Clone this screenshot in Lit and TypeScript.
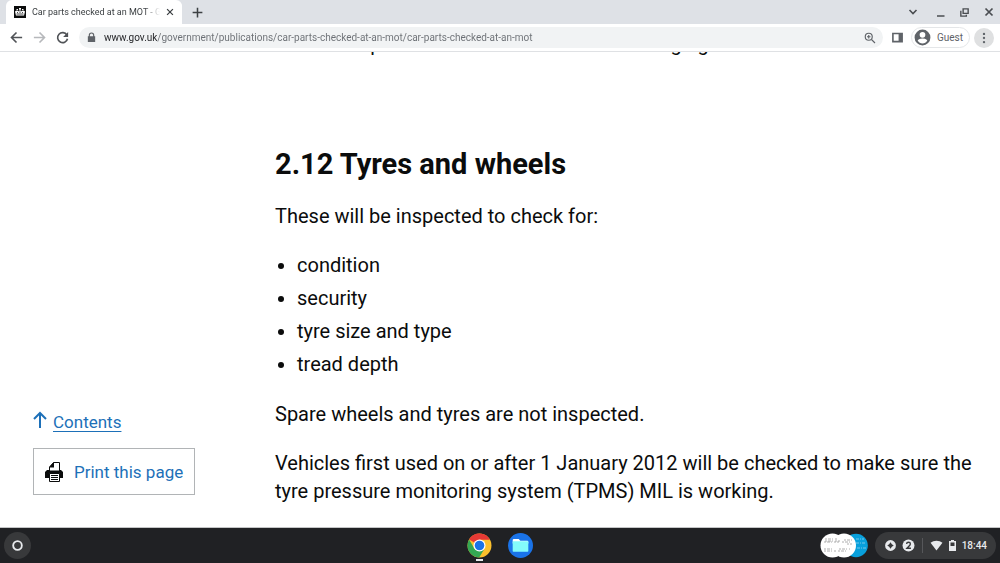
import { LitElement, html, css, svg } from "lit";
import { customElement } from "lit/decorators.js";

const stroke = (size: number, width: number, body: unknown) => html`<svg
  width=${size} height=${size} viewBox="0 0 24 24" fill="none" stroke="currentColor"
  stroke-width=${width} aria-hidden="true">${body}</svg>`;
const solid = (size: number, body: unknown) => html`<svg
  width=${size} height=${size} viewBox="0 0 24 24" fill="currentColor" aria-hidden="true">${body}</svg>`;

const resets = css`
  :host { display: block; box-sizing: border-box; }
  * { box-sizing: border-box; }
  svg { display: block; flex: none; }
  button { border: 0; padding: 0; margin: 0; background: none; color: inherit; font: inherit; cursor: pointer; display: flex; align-items: center; justify-content: center; flex: none; }
`;

@customElement("browser-bar")
class BrowserBar extends LitElement {
  static styles = [resets, css`
    :host { flex: none; font: 10px/16px Roboto, sans-serif; color: #3c4043; border-bottom: 1px solid #dfe1e4; }
    .tabs { display: flex; height: 24px; background: #dee1e6; padding-left: 6px; }
    .tab { display: flex; align-items: center; width: 176px; background: #fff; border-radius: 6px 6px 0 0; padding: 0 8px; gap: 6px; }
    .title { flex: 1; overflow: hidden; white-space: nowrap; font-size: 9px; -webkit-mask-image: linear-gradient(90deg, #000 88%, transparent); mask-image: linear-gradient(90deg, #000 88%, transparent); }
    .close { width: 8px; height: 16px; }
    .add { width: 30px; }
    .controls { margin-left: auto; display: flex; align-items: center; gap: 11px; padding-right: 5px; color: #4a4d51; }
    .controls button { width: 13px; height: 16px; }
    .controls .search { margin-right: 4px; }
    .toolbar { display: flex; align-items: center; height: 27px; background: #fff; padding: 0 6px 0 8px; color: #5f6368; }
    .nav { display: flex; gap: 7px; margin-right: 9px; }
    .nav button { width: 16px; height: 20px; color: #505357; }
    .nav .off { color: #b6b8bb; }
    .address { flex: 1; display: flex; align-items: center; gap: 7px; height: 21px; border-radius: 11px; background: #f1f3f4; padding: 0 7px; }
    .address input { flex: 1; min-width: 0; border: 0; padding: 0; outline: 0; font: 10px/16px Roboto, sans-serif; -webkit-text-fill-color: transparent; background: linear-gradient(90deg, #202124 53px, #6b6f74 53px); -webkit-background-clip: text; background-clip: text; }
    .panel { width: 26px; height: 20px; margin-left: 2px; }
    .guest { height: 21px; border: 1px solid #e4e6e8; border-radius: 11px; padding: 0 6px 0 1px; gap: 5px; color: #5f6368; }
    .menu { width: 20px; height: 20px; border-radius: 50%; background: #dfe0e1; margin-left: 4px; }
  `];
  render() {
    return html`
      <div class="tabs">
        <div class="tab">
          <svg width="12" height="12" viewBox="0 0 24 24" aria-hidden="true">
            <path fill="#0b0c0c" d="M0 0h24v24H0z" />
            <path fill="#fff" d="M4 19 2 11c2-3 6-3 8 0l1-2h2l1 2c2-3 6-3 8 0l-2 8z" />
            <path fill="#fff" d="M10 4h4v3h-1v2h-2V7h-1zM5 6h3v2H5zM16 6h3v2h-3z" />
            <path stroke="#0b0c0c" stroke-width="1.500" d="M5 16h14M7 12v2m5-3v3m5-2v2" />
          </svg>
          <span class="title">Car parts checked at an MOT - GOV.UK</span>
          <button class="close" aria-label="Close tab">${stroke(10, 3, svg`<path d="M5 5l14 14M19 5 5 19" />`)}</button>
        </div>
        <button class="add" aria-label="New tab">${stroke(13, 2.8, svg`<path d="M12 3v18M3 12h18" />`)}</button>
        <div class="controls">
          <button class="search" aria-label="Search tabs">${stroke(12, 3.2, svg`<path d="m5 8 7 7 7-7" />`)}</button>
          <button aria-label="Minimise">${stroke(12, 3, svg`<path d="M4 20h15" />`)}</button>
          <button aria-label="Restore">${stroke(11, 3, svg`<path d="M9 4h11v10H9zM4 8v12h12v-3" />`)}</button>
          <button aria-label="Close window">${stroke(12, 3.4, svg`<path d="m5 5 14 14M19 5 5 19" />`)}</button>
        </div>
      </div>
      <div class="toolbar">
        <div class="nav">
          <button aria-label="Back">${stroke(15, 2.6, svg`<path d="M21 12H4m8-8-8 8 8 8" />`)}</button>
          <button class="off" aria-label="Forward">${stroke(15, 2.6, svg`<path d="M3 12h17m-8-8 8 8-8 8" />`)}</button>
          <button aria-label="Reload">${stroke(15, 2.6, svg`<path d="M19 8a8 8 0 1 0 1 6" /><path fill="currentColor" stroke="none" d="M21 3v8h-8z" />`)}</button>
        </div>
        <div class="address">
          ${solid(11, svg`<path d="M6 9V7a6 6 0 0 1 12 0v2h2v13H4V9zm2.500 0h7V7a3.500 3.500 0 0 0-7 0z" />`)}
          <input type="text" aria-label="Address" .value=${"www.gov.uk/government/publications/car-parts-checked-at-an-mot/car-parts-checked-at-an-mot"} />
          <button aria-label="Zoom">${stroke(12, 2.300, svg`<circle cx="9.500" cy="9.500" r="7" /><path d="m15 15 7 7M6 9.500h7M9.500 6v7" />`)}</button>
        </div>
        <button class="panel" aria-label="Side panel">${solid(13, svg`<path d="M2 3h20v18H2zm3 3v12h9V6z" fill-rule="evenodd" />`)}</button>
        <button class="guest">${solid(19, svg`<path fill-rule="evenodd" d="M12 2a10 10 0 1 0 0 20 10 10 0 0 0 0-20zm0 3a3.600 3.600 0 1 1 0 7.200A3.600 3.600 0 0 1 12 5zm0 14.500c-2.500 0-4.800-1.300-6-3.300 0-2 4-3 6-3s6 1 6 3c-1.200 2-3.500 3.300-6 3.300z" />`)}Guest</button>
        <button class="menu" aria-label="Menu">${solid(14, svg`<circle cx="12" cy="5" r="2" /><circle cx="12" cy="12" r="2" /><circle cx="12" cy="19" r="2" />`)}</button>
      </div>`;
  }
}

@customElement("guidance-page")
class GuidancePage extends LitElement {
  static styles = [resets, css`
    :host { flex: 1; min-height: 0; overflow: hidden; display: grid; grid-template-columns: 242px 1fr; padding: 0 20px 0 33px; background: #fff; color: #0b0c0c; font: 20px/28px Roboto, sans-serif; }
    aside { align-self: end; display: flex; flex-direction: column; align-items: flex-start; gap: 14px; padding-bottom: 32px; font-size: 17px; line-height: 24px; color: #1d70b8; }
    .contents { display: flex; align-items: center; gap: 6px; color: inherit; text-decoration: none; }
    .contents svg { margin-bottom: 4px; }
    .contents span { text-decoration: underline; text-decoration-thickness: 1px; text-underline-offset: 3px; }
    .print { height: 47px; padding: 0 11px; gap: 11px; border: 1px solid #b1b4b6; }
    .print svg { color: #0b0c0c; }
    article { margin-top: -22px; }
    p { margin: 0 0 21px; }
    h3 { margin: 88px 0 20px; font-size: 29px; line-height: 36px; font-weight: 700; }
    ul { margin: 0 0 22px; padding-left: 22px; }
    li + li { margin-top: 5px; }
  `];
  render() {
    return html`
      <aside>
        <a class="contents" href="#contents">
          <svg width="14" height="18" viewBox="0 0 14 18" fill="none" stroke="currentColor" stroke-width="2" aria-hidden="true"><path d="M7 17V2M1 8l6-6 6 6" /></svg>
          <span>Contents</span>
        </a>
        <button class="print">
          <svg width="18" height="20" viewBox="0 0 18 20" aria-hidden="true">
            <path fill="#fff" stroke="currentColor" d="M4.500 9V5L8.500.500h6V9z" />
            <path fill="currentColor" d="M4 5.500 9 0v5.500zM0 10l2-2h2v1h11V8h1l2 2v6H0z" />
            <path fill="#fff" stroke="currentColor" d="M4.500 11.500h10v8h-10z" />
            <path stroke="currentColor" d="M6 13.500h7M6 15.500h7M6 17.500h7" />
          </svg>
          Print this page
        </button>
      </aside>
      <article>
        <p>All doors open from the inside and when hanging</p>
        <h3>2.12 Tyres and wheels</h3>
        <p>These will be inspected to check for:</p>
        <ul>
          <li>condition</li>
          <li>security</li>
          <li>tyre size and type</li>
          <li>tread depth</li>
        </ul>
        <p>Spare wheels and tyres are not inspected.</p>
        <p>Vehicles first used on or after 1 January 2012 will be checked to make sure the tyre pressure monitoring system (TPMS) MIL is working.</p>
      </article>`;
  }
}

@customElement("system-shelf")
class SystemShelf extends LitElement {
  static styles = [resets, css`
    :host { flex: none; display: grid; grid-template-columns: 1fr auto 1fr; align-items: center; height: 36px; background: #202124; border-top: 1px solid #c4c5c6; padding: 0 4px; color: #e8eaed; font: 500 10px/16px Roboto, sans-serif; }
    .launcher { width: 27px; height: 27px; border-radius: 50%; background: #38393b; }
    .apps { display: flex; gap: 16px; }
    .app { width: 25px; height: 35px; }
    .app.open { background: linear-gradient(#e8eaed, #e8eaed) center bottom 2px / 7px 2px no-repeat; }
    .right { display: flex; justify-content: flex-end; align-items: center; gap: 7px; }
    .status { height: 27px; border-radius: 14px; background: #38393b; padding: 0 9px; gap: 5px; }
    .rule { width: 1px; height: 15px; background: #56575a; margin: 0 2px; }
  `];
  render() {
    return html`
      <div><button class="launcher" aria-label="Launcher">${stroke(13, 3.400, svg`<circle cx="12" cy="12" r="8" />`)}</button></div>
      <div class="apps">
        <button class="app open" aria-label="Chrome">
          <svg width="25" height="25" viewBox="0 0 24 24" aria-hidden="true">
            <circle cx="12" cy="12" r="11.500" fill="#fbc02d" />
            <path fill="#e53935" d="M12 12 2 6.200A11.500 11.500 0 0 1 22 6.500H12z" />
            <path fill="#34a853" d="M2 6.200a11.500 11.500 0 0 0 9.700 17.300L16.800 15 12 12 7.200 15z" />
            <circle cx="12" cy="12" r="5.800" fill="#fff" /><circle cx="12" cy="12" r="4.600" fill="#1a73e8" />
          </svg>
        </button>
        <button class="app" aria-label="Files">
          <svg width="25" height="25" viewBox="0 0 24 24" aria-hidden="true">
            <circle cx="12" cy="12" r="12" fill="#1a73e8" />
            <path fill="#fff" d="M4.500 7V6.500l.800-.800h5l1.500 1.800h7l.700.700V10h-15z" /><rect x="4.500" y="8" width="15" height="10" rx=".700" fill="#84fbfb" />
          </svg>
        </button>
      </div>
      <div class="right">
        <button aria-label="Recent files">
          <svg width="48" height="25" viewBox="0 0 48 25" aria-hidden="true">
            <circle cx="36" cy="12.500" r="11.800" fill="#08a0dc" />
            <path stroke="#74c9ec" stroke-dasharray="3 1 1 1" d="M36 6h8M36 10h10M37 15h9" />
            <circle cx="24" cy="12.500" r="12" fill="#fff" />
            <circle cx="12.500" cy="12.500" r="12" fill="#fff" />
            <path stroke="#999" stroke-width=".800" stroke-dasharray="2 1 3 1 1 2" d="M5 6h13M5 8h15M4 9h15M24 7h8M22 9h8M27 11h5M4 16h10M19 16h11M4 18h12M18 18h10" />
          </svg>
        </button>
        <button class="status" aria-label="Status, 2 notifications, 18:44">
          ${solid(13, svg`<path fill-rule="evenodd" d="M12 2a10 10 0 1 0 0 20 10 10 0 0 0 0-20zm0 4 2.500 3.500L18 12l-3.500 2.500L12 18l-2.500-3.500L6 12l3.500-2.500z" />`)}
          <svg width="13" height="13" viewBox="0 0 24 24" fill="none" aria-hidden="true">
            <circle cx="12" cy="12" r="11" fill="#e8eaed" /><path stroke="#38393b" stroke-width="2.500" d="M8.500 9c0-4 7-4 7 0 0 2.500-4 5-6.500 8h7.500" />
          </svg>
          <span class="rule"></span>
          ${solid(13, svg`<path d="M1 7c6-5 16-5 22 0L12 21z" />`)}
          <svg width="9" height="13" viewBox="0 0 9 13" fill="currentColor" aria-hidden="true"><path fill-rule="evenodd" d="M3 1h3v1h2v10H1V2h2zM2.500 3.500V7h4V3.500z" /></svg>
          <span>18:44</span>
        </button>
      </div>`;
  }
}

@customElement("app-root")
class AppRoot extends LitElement {
  static styles = css`:host { display: flex; flex-direction: column; height: 100vh; overflow: hidden; }`;
  render() {
    return html`<browser-bar></browser-bar><guidance-page></guidance-page><system-shelf></system-shelf>`;
  }
}
